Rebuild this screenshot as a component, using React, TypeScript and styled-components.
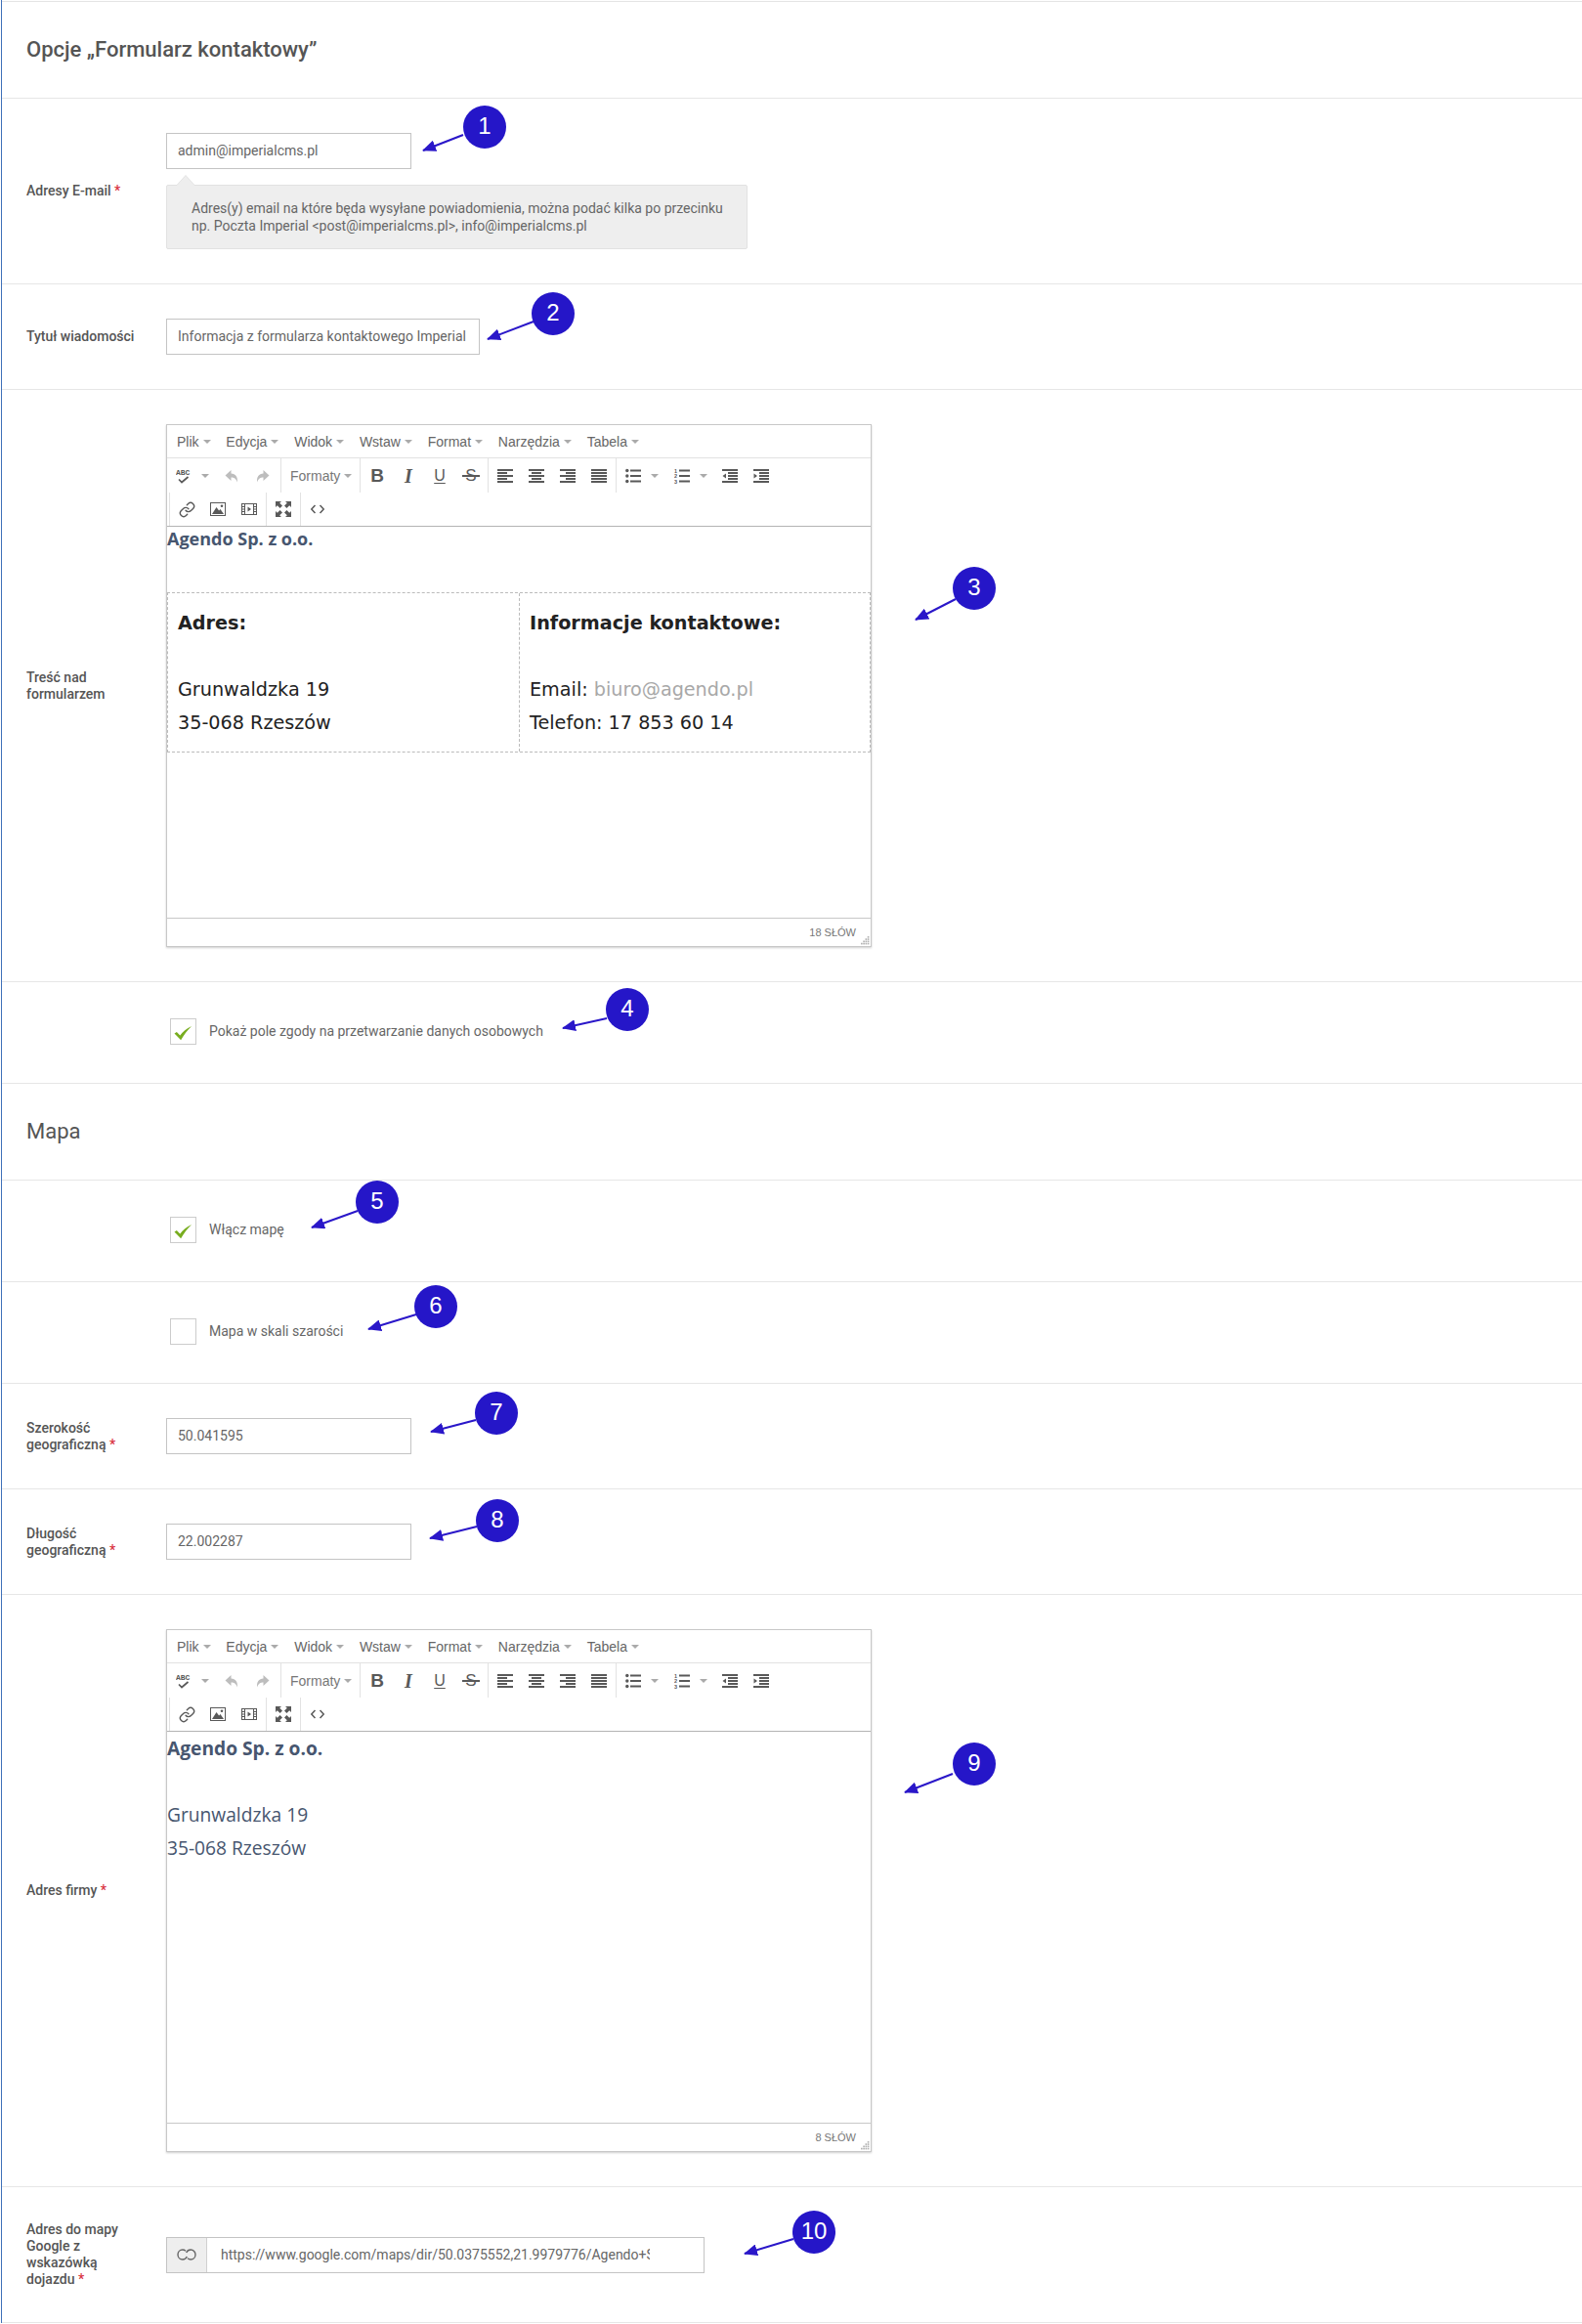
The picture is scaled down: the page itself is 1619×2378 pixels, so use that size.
import { Link as LinkIcon } from "lucide-react";
import styled, { createGlobalStyle } from "styled-components";

type ToolName =
  | "spell"
  | "undo"
  | "redo"
  | "alignLeft"
  | "alignCenter"
  | "alignRight"
  | "justify"
  | "bullets"
  | "numbers"
  | "outdent"
  | "indent"
  | "link"
  | "image"
  | "media"
  | "fullscreen"
  | "code";

const menuItems = ["Plik", "Edycja", "Widok", "Wstaw", "Format", "Narzędzia", "Tabela"];

const callouts = [
  { n: 1, x: 496, y: 130, from: [474, 138], to: [433, 154] },
  { n: 2, x: 566, y: 321, from: [546, 329], to: [499, 347] },
  { n: 3, x: 997, y: 602, from: [978, 613], to: [937, 634] },
  { n: 4, x: 642, y: 1033, from: [621, 1042], to: [576, 1052] },
  { n: 5, x: 386, y: 1230, from: [366, 1239], to: [319, 1256] },
  { n: 6, x: 446, y: 1337, from: [426, 1345], to: [377, 1360] },
  { n: 7, x: 508, y: 1446, from: [487, 1453], to: [441, 1465] },
  { n: 8, x: 509, y: 1556, from: [488, 1562], to: [440, 1574] },
  { n: 9, x: 997, y: 1805, from: [975, 1815], to: [926, 1834] },
  { n: 10, x: 833, y: 2284, from: [812, 2291], to: [762, 2306] },
];

function ToolIcon({ name }: { name: ToolName }) {
  if (name === "spell") {
    return (
      <Glyph viewBox="0 0 16 16">
        <SpellText x="0" y="7">
          ABC
        </SpellText>
        <path d="M3 11.5 6 14.5 12.5 9" fill="none" stroke="currentColor" strokeWidth="1.7" />
      </Glyph>
    );
  }
  if (name === "undo" || name === "redo") {
    return (
      <Glyph viewBox="0 0 16 16" $muted $flip={name === "redo"}>
        <path d="M7.5 2 1.5 7.5l6 5.5V9.6c3 0 5 1 6.3 4.9C14.6 8.5 12 5.6 7.5 5.4Z" fill="currentColor" />
      </Glyph>
    );
  }
  if (name === "alignLeft" || name === "alignCenter" || name === "alignRight" || name === "justify") {
    const short = name === "justify" ? 16 : 10;
    const shortX = name === "alignCenter" ? 3 : name === "alignRight" ? 6 : 0;
    return (
      <Glyph viewBox="0 0 16 16">
        <rect x="0" y="1" width="16" height="2" fill="currentColor" />
        <rect x={shortX} y="4" width={short} height="2" fill="currentColor" />
        <rect x="0" y="7" width="16" height="2" fill="currentColor" />
        <rect x={shortX} y="10" width={short} height="2" fill="currentColor" />
        <rect x="0" y="13" width="16" height="2" fill="currentColor" />
      </Glyph>
    );
  }
  if (name === "bullets") {
    return (
      <Glyph viewBox="0 0 16 16">
        {[2.5, 8, 13.5].map((y) => (
          <g key={y}>
            <circle cx="1.8" cy={y} r="1.7" fill="currentColor" />
            <rect x="5" y={y - 1} width="11" height="2" fill="currentColor" />
          </g>
        ))}
      </Glyph>
    );
  }
  if (name === "numbers") {
    return (
      <Glyph viewBox="0 0 16 16">
        {[2.5, 8, 13.5].map((y, index) => (
          <g key={y}>
            <NumberText x="0" y={y + 2}>
              {index + 1}
            </NumberText>
            <rect x="5" y={y - 1} width="11" height="2" fill="currentColor" />
          </g>
        ))}
      </Glyph>
    );
  }
  if (name === "outdent" || name === "indent") {
    return (
      <Glyph viewBox="0 0 16 16">
        <rect x="0" y="1" width="16" height="2" fill="currentColor" />
        <rect x="6" y="4" width="10" height="2" fill="currentColor" />
        <rect x="6" y="7" width="10" height="2" fill="currentColor" />
        <rect x="6" y="10" width="10" height="2" fill="currentColor" />
        <rect x="0" y="13" width="16" height="2" fill="currentColor" />
        <path d={name === "indent" ? "M0.5 5.5 4 8l-3.5 2.5Z" : "M4 5.5 0.5 8 4 10.5Z"} fill="currentColor" />
      </Glyph>
    );
  }
  if (name === "link") {
    return <LinkIcon size={17} strokeWidth={2} />;
  }
  if (name === "image") {
    return (
      <Glyph viewBox="0 0 16 16">
        <rect x="0.5" y="1.5" width="15" height="13" fill="none" stroke="currentColor" />
        <path d="M2 13 6.5 6l2.6 3.4L10.5 8l3.5 5Z" fill="currentColor" />
        <circle cx="12" cy="4.8" r="1.3" fill="currentColor" />
      </Glyph>
    );
  }
  if (name === "media") {
    return (
      <Glyph viewBox="0 0 16 16">
        <rect x="0.5" y="2.5" width="15" height="11" fill="none" stroke="currentColor" />
        <path d="M3.5 3v10M12.5 3v10M1 5.5h2.5M1 8h2.5M1 10.5h2.5M12.5 5.5H15M12.5 8H15M12.5 10.5H15" stroke="currentColor" />
        <path d="M6.5 5.5 10 8l-3.5 2.5Z" fill="currentColor" />
      </Glyph>
    );
  }
  if (name === "fullscreen") {
    return (
      <Glyph viewBox="0 0 16 16">
        <path d="M0 0h6L4.2 1.8 7 4.6 4.6 7 1.8 4.2 0 6Z" fill="currentColor" />
        <path d="M16 0v6l-1.8-1.8L11.4 7 9 4.6l2.8-2.8L10 0Z" fill="currentColor" />
        <path d="M0 16v-6l1.8 1.8L4.6 9 7 11.4l-2.8 2.8L6 16Z" fill="currentColor" />
        <path d="M16 16h-6l1.8-1.8L9 11.4 11.4 9l2.8 2.8L16 10Z" fill="currentColor" />
      </Glyph>
    );
  }
  return (
    <Glyph viewBox="0 0 16 16">
      <path d="M5.5 4 1.8 8l3.7 4M10.5 4l3.7 4-3.7 4" fill="none" stroke="currentColor" strokeWidth="1.5" />
    </Glyph>
  );
}

function ToolButton({ name }: { name: ToolName }) {
  return (
    <Tool>
      <ToolIcon name={name} />
    </Tool>
  );
}

function ResizeGrip() {
  return (
    <GripSvg viewBox="0 0 8 8">
      {[
        [6, 0],
        [4, 2],
        [6, 2],
        [2, 4],
        [4, 4],
        [6, 4],
        [0, 6],
        [2, 6],
        [4, 6],
        [6, 6],
      ].map(([x, y]) => (
        <rect key={`${x}-${y}`} x={x} y={y} width="1.5" height="1.5" fill="#b5b5b5" />
      ))}
    </GripSvg>
  );
}

function Editor({ words, children }: { words: string; children: React.ReactNode }) {
  return (
    <EditorShell>
      <MenuBar>
        {menuItems.map((item) => (
          <MenuItem key={item}>
            {item}
            <Caret />
          </MenuItem>
        ))}
      </MenuBar>
      <ToolRow>
        <ToolGroup $plain>
          <ToolButton name="spell" />
          <CaretSlot $w={17}>
            <Caret />
          </CaretSlot>
          <ToolButton name="undo" />
          <ToolButton name="redo" />
        </ToolGroup>
        <ToolGroup>
          <FormatButton>
            Formaty
            <Caret />
          </FormatButton>
        </ToolGroup>
        <ToolGroup>
          <Tool>
            <BoldGlyph>B</BoldGlyph>
          </Tool>
          <Tool>
            <ItalicGlyph>I</ItalicGlyph>
          </Tool>
          <Tool>
            <UnderlineGlyph>U</UnderlineGlyph>
          </Tool>
          <Tool>
            <StrikeGlyph>S</StrikeGlyph>
          </Tool>
        </ToolGroup>
        <ToolGroup>
          <ToolButton name="alignLeft" />
          <ToolButton name="alignCenter" />
          <ToolButton name="alignRight" />
          <ToolButton name="justify" />
        </ToolGroup>
        <ToolGroup>
          <ToolButton name="bullets" />
          <CaretSlot $w={18}>
            <Caret />
          </CaretSlot>
          <ToolButton name="numbers" />
          <CaretSlot $w={17}>
            <Caret />
          </CaretSlot>
          <ToolButton name="outdent" />
          <ToolButton name="indent" />
        </ToolGroup>
      </ToolRow>
      <ToolRow $second>
        <ToolGroup>
          <ToolButton name="link" />
          <ToolButton name="image" />
          <ToolButton name="media" />
        </ToolGroup>
        <ToolGroup>
          <ToolButton name="fullscreen" />
        </ToolGroup>
        <ToolGroup>
          <ToolButton name="code" />
        </ToolGroup>
      </ToolRow>
      <EditorBody>{children}</EditorBody>
      <StatusBar>
        {words}
        <ResizeGrip />
      </StatusBar>
    </EditorShell>
  );
}

function CheckRow({ checked, label }: { checked?: boolean; label: string }) {
  return (
    <CheckSection>
      <CheckBox>
        {checked && (
          <CheckSvg viewBox="0 0 20 16">
            <path d="M0.5 8.5 3 7l3.6 3.5C9.5 6.5 13.5 3 19 0.5 14.5 5 11 9.5 7.5 15.5Z" fill="#78ad1f" />
          </CheckSvg>
        )}
      </CheckBox>
      <CheckLabel>{label}</CheckLabel>
    </CheckSection>
  );
}

export default function App() {
  return (
    <Page>
      <GlobalStyle />
      <MainTitle>Opcje „Formularz kontaktowy”</MainTitle>

      <Row>
        <Label>
          Adresy E-mail <Req>*</Req>
        </Label>
        <div>
          <TextInput $w={251} readOnly value="admin@imperialcms.pl" />
          <Hint>
            Adres(y) email na które będa wysyłane powiadomienia, można podać kilka po przecinku
            <br />
            np. Poczta Imperial &lt;post@imperialcms.pl&gt;, info@imperialcms.pl
          </Hint>
        </div>
      </Row>

      <Row>
        <Label>Tytuł wiadomości</Label>
        <TextInput $w={321} readOnly value="Informacja z formularza kontaktowego Imperial" />
      </Row>

      <Row>
        <Label>Treść nad formularzem</Label>
        <Editor words="18 SŁÓW">
          <LeadLine>Agendo Sp. z o.o.</LeadLine>
          <ContactTable>
            <ContactCell>
              <CellHeading>Adres:</CellHeading>
              <CellLine>&nbsp;</CellLine>
              <CellLine>Grunwaldzka 19</CellLine>
              <CellLine>35-068 Rzeszów</CellLine>
            </ContactCell>
            <ContactCell>
              <CellHeading>Informacje kontaktowe:</CellHeading>
              <CellLine>&nbsp;</CellLine>
              <CellLine>
                Email: <MailLink>biuro@agendo.pl</MailLink>
              </CellLine>
              <CellLine>Telefon: 17 853 60 14</CellLine>
            </ContactCell>
          </ContactTable>
        </Editor>
      </Row>

      <CheckRow checked label="Pokaż pole zgody na przetwarzanie danych osobowych" />

      <SectionTitle>Mapa</SectionTitle>

      <CheckRow checked label="Włącz mapę" />
      <CheckRow label="Mapa w skali szarości" />

      <Row>
        <Label>
          Szerokość geograficzną <Req>*</Req>
        </Label>
        <TextInput $w={251} readOnly value="50.041595" />
      </Row>

      <Row>
        <Label>
          Długość geograficzną <Req>*</Req>
        </Label>
        <TextInput $w={251} readOnly value="22.002287" />
      </Row>

      <Row>
        <Label>
          Adres firmy <Req>*</Req>
        </Label>
        <Editor words="8 SŁÓW">
          <AddressLine $strong>Agendo Sp. z o.o.</AddressLine>
          <AddressLine>&nbsp;</AddressLine>
          <AddressLine>Grunwaldzka 19</AddressLine>
          <AddressLine>35-068 Rzeszów</AddressLine>
        </Editor>
      </Row>

      <Row>
        <Label>
          Adres do mapy Google z wskazówką dojazdu <Req>*</Req>
        </Label>
        <InputGroup>
          <InputAddon>
            <svg viewBox="0 0 20 12" width="20" height="12" fill="none" stroke="#666" strokeWidth="1.4">
              <path d="M9 2.2C8 1.3 6.9 1 5.8 1 3.1 1 1 3.2 1 6s2.1 5 4.8 5c2.2 0 3.8-1.2 4.5-3" />
              <path d="M11 9.8c1 .9 2.1 1.2 3.2 1.2 2.7 0 4.8-2.2 4.8-5s-2.1-5-4.8-5c-2.2 0-3.8 1.2-4.5 3" />
            </svg>
          </InputAddon>
          <GroupInput readOnly value="https://www.google.com/maps/dir/50.0375552,21.9979776/Agendo+Sp.+z+o.o./" />
        </InputGroup>
      </Row>

      <ArrowLayer viewBox="0 0 1619 2378">
        <defs>
          <marker id="head" markerWidth="7" markerHeight="6" refX="6.5" refY="3" orient="auto" markerUnits="strokeWidth">
            <path d="M0 0 7 3 0 6Z" fill="#2a17c9" />
          </marker>
        </defs>
        {callouts.map(({ n, from, to }) => (
          <line
            key={n}
            x1={from[0]}
            y1={from[1]}
            x2={to[0]}
            y2={to[1]}
            stroke="#2a17c9"
            strokeWidth="2"
            markerEnd="url(#head)"
          />
        ))}
      </ArrowLayer>
      {callouts.map(({ n, x, y }) => (
        <Badge key={n} $x={x} $y={y}>
          {n}
        </Badge>
      ))}
    </Page>
  );
}

const GlobalStyle = createGlobalStyle`
  html, body {
    margin: 0;
    padding: 0;
    background: #fff;
  }
`;

const Page = styled.div`
  position: relative;
  box-sizing: border-box;
  width: 1618px;
  margin-left: 1px;
  padding-top: 1px;
  border-left: 1px solid #3f70b8;
  font-family: Roboto, "Liberation Sans", sans-serif;
  font-size: 14px;
  color: #666;
`;

const MainTitle = styled.h1`
  box-sizing: border-box;
  display: flex;
  align-items: center;
  height: 100px;
  margin: 0;
  padding: 0 0 2px 25px;
  border-top: 1px solid #e4e4e4;
  border-bottom: 1px solid #e6e6e6;
  font-size: 22px;
  font-weight: 500;
  color: #555;
`;

const SectionTitle = styled.h2`
  box-sizing: border-box;
  display: flex;
  align-items: center;
  height: 99px;
  margin: 0;
  padding: 0 0 2px 25px;
  border-bottom: 1px solid #e6e6e6;
  font-size: 22px;
  font-weight: 400;
  color: #555;
`;

const Row = styled.section`
  display: flex;
  align-items: center;
  padding: 35px 0;
  border-bottom: 1px solid #e6e6e6;
`;

const Label = styled.label`
  box-sizing: border-box;
  flex: none;
  width: 168px;
  padding: 0 28px 0 25px;
  font-size: 14px;
  font-weight: 500;
  line-height: 17px;
  color: #555;
`;

const Req = styled.span`
  color: #d9333f;
`;

const TextInput = styled.input<{ $w: number }>`
  box-sizing: border-box;
  display: block;
  width: ${({ $w }) => $w}px;
  height: 37px;
  padding: 0 11px 1px;
  border: 1px solid #c4c4c4;
  border-radius: 0;
  outline: none;
  font-family: inherit;
  font-size: 14px;
  color: #666;
`;

const Hint = styled.div`
  position: relative;
  box-sizing: border-box;
  width: 595px;
  height: 66px;
  margin-top: 16px;
  padding: 14px 20px 0 25px;
  border: 1px solid #e2e2e2;
  border-radius: 2px;
  background: #eeeeee;
  line-height: 18px;
  color: #666;

  &::before,
  &::after {
    content: "";
    position: absolute;
    left: 9px;
    border-style: solid;
    border-color: transparent transparent #e2e2e2;
    border-width: 0 10px 11px;
    top: -11px;
  }

  &::after {
    top: -10px;
    border-bottom-color: #eeeeee;
  }
`;

const EditorShell = styled.div`
  box-sizing: border-box;
  display: flex;
  flex-direction: column;
  width: 722px;
  height: 535px;
  border: 1px solid #c8c8c8;
  background: #fff;
  box-shadow: 0 1px 2px rgba(0, 0, 0, 0.2);
  font-family: "Liberation Sans", Arial, sans-serif;
`;

const MenuBar = styled.div`
  box-sizing: border-box;
  display: flex;
  align-items: center;
  gap: 15.8px;
  flex: none;
  height: 34px;
  padding-left: 10px;
  border-bottom: 1px solid #e2e2e2;
`;

const MenuItem = styled.span`
  display: inline-flex;
  align-items: center;
  font-size: 14px;
  color: #666;
`;

const Caret = styled.i`
  display: inline-block;
  width: 0;
  height: 0;
  margin-left: 4px;
  border-style: solid;
  border-color: #aaa transparent transparent;
  border-width: 4px 4px 0;
`;

const ToolRow = styled.div<{ $second?: boolean }>`
  display: flex;
  flex: none;
  height: ${({ $second }) => ($second ? 34 : 35)}px;
  padding-left: ${({ $second }) => ($second ? 2 : 0)}px;
`;

const ToolGroup = styled.div<{ $plain?: boolean }>`
  display: flex;
  align-items: center;
  padding: ${({ $plain }) => ($plain ? "0 2px 0 1px" : "0 1px")};
  border-left: ${({ $plain }) => ($plain ? "none" : "1px solid #e2e2e2")};
`;

const Tool = styled.span`
  display: inline-flex;
  align-items: center;
  justify-content: center;
  width: 32px;
  height: 100%;
  color: #595959;
`;

const CaretSlot = styled.span<{ $w: number }>`
  display: inline-flex;
  align-items: center;
  width: ${({ $w }) => $w}px;
  height: 100%;

  ${Caret} {
    margin-left: 2px;
  }
`;

const FormatButton = styled.span`
  box-sizing: border-box;
  display: inline-flex;
  align-items: center;
  width: 78px;
  padding-left: 8px;
  font-size: 14px;
  color: #777;
`;

const Glyph = styled.svg<{ $muted?: boolean; $flip?: boolean }>`
  width: 16px;
  height: 16px;
  color: ${({ $muted }) => ($muted ? "#bdbdbd" : "#595959")};
  transform: ${({ $flip }) => ($flip ? "scaleX(-1)" : "none")};
`;

const SpellText = styled.text`
  font-family: "Liberation Mono", monospace;
  font-size: 8px;
  font-weight: 700;
  fill: currentColor;
`;

const NumberText = styled.text`
  font-family: "Liberation Sans", sans-serif;
  font-size: 5.5px;
  font-weight: 700;
  fill: currentColor;
`;

const BoldGlyph = styled.span`
  font-size: 19px;
  font-weight: 700;
  line-height: 1;
`;

const ItalicGlyph = styled.span`
  font-family: "Liberation Serif", serif;
  font-size: 20px;
  font-style: italic;
  font-weight: 700;
  line-height: 1;
`;

const UnderlineGlyph = styled.span`
  font-size: 16px;
  line-height: 1;
  text-decoration: underline;
  text-underline-offset: 2px;
`;

const StrikeGlyph = styled.span`
  position: relative;
  font-size: 17px;
  line-height: 1;

  &::after {
    content: "";
    position: absolute;
    top: 8px;
    left: -3px;
    right: -3px;
    height: 1.5px;
    background: currentColor;
  }
`;

const EditorBody = styled.div`
  flex: 1;
  border-top: 1px solid #b4b4b4;
  font-family: "Open Sans", sans-serif;
`;

const LeadLine = styled.p`
  height: 25px;
  margin: 0 0 42px;
  padding: 0;
  font-size: 18px;
  font-weight: 700;
  line-height: 25px;
  color: #47566f;
`;

const ContactTable = styled.div`
  display: grid;
  grid-template-columns: 359px 1fr;
  border: 1px dashed #bbb;
  font-family: "DejaVu Sans", sans-serif;
  font-size: 19.2px;
  color: #222;
`;

const ContactCell = styled.div`
  padding: 14px 10px 12px;

  & + & {
    border-left: 1px dashed #bbb;
  }
`;

const CellHeading = styled.div`
  font-weight: 700;
  line-height: 34px;
`;

const CellLine = styled.div`
  line-height: 34px;
`;

const MailLink = styled.span`
  color: #a8a8a8;
`;

const AddressLine = styled.p<{ $strong?: boolean }>`
  margin: 0;
  font-size: 19.2px;
  font-weight: ${({ $strong }) => ($strong ? 700 : 400)};
  line-height: 34px;
  color: #47566f;
`;

const StatusBar = styled.div`
  position: relative;
  box-sizing: border-box;
  display: flex;
  align-items: center;
  justify-content: flex-end;
  flex: none;
  height: 29px;
  padding-right: 15px;
  border-top: 1px solid #c8c8c8;
  font-size: 11px;
  color: #777;
`;

const GripSvg = styled.svg`
  position: absolute;
  right: 1px;
  bottom: 1px;
  width: 9px;
  height: 9px;
`;

const CheckSection = styled.section`
  display: flex;
  align-items: center;
  height: 33px;
  padding: 34px 0 36px 172px;
  border-bottom: 1px solid #e6e6e6;
`;

const CheckBox = styled.span`
  box-sizing: border-box;
  display: flex;
  align-items: center;
  justify-content: center;
  flex: none;
  width: 27px;
  height: 27px;
  border: 1px solid #ccc;
`;

const CheckSvg = styled.svg`
  width: 19px;
  height: 16px;
  margin-top: 2px;
`;

const CheckLabel = styled.span`
  margin-left: 13px;
  padding-bottom: 2px;
  font-size: 14px;
  color: #666;
`;

const InputGroup = styled.div`
  box-sizing: border-box;
  display: flex;
  width: 551px;
  height: 37px;
  border: 1px solid #c4c4c4;
`;

const InputAddon = styled.span`
  display: flex;
  align-items: center;
  justify-content: center;
  flex: none;
  width: 40px;
  border-right: 1px solid #d0d0d0;
  background: #eeeeee;
`;

const GroupInput = styled.input`
  box-sizing: border-box;
  flex: 1;
  min-width: 0;
  height: 100%;
  padding: 0 55px 1px 14px;
  border: none;
  outline: none;
  font-family: inherit;
  font-size: 14px;
  color: #666;
`;

const ArrowLayer = styled.svg`
  position: absolute;
  top: 0;
  left: -2px;
  width: 1619px;
  height: 2378px;
  pointer-events: none;
`;

const Badge = styled.div<{ $x: number; $y: number }>`
  position: absolute;
  top: ${({ $y }) => $y - 22}px;
  left: ${({ $x }) => $x - 24}px;
  display: flex;
  align-items: center;
  justify-content: center;
  width: 44px;
  height: 44px;
  padding-bottom: 3px;
  box-sizing: border-box;
  border-radius: 50%;
  background: #2516c8;
  font-family: "Liberation Sans", sans-serif;
  font-size: 24px;
  color: #fff;
`;
